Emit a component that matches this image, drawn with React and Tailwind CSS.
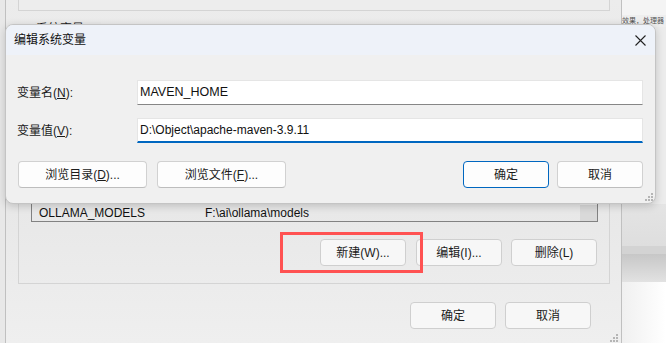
import React from 'react';

const font = { fontFamily: '"Liberation Sans", "Noto Sans CJK SC", sans-serif' };

function Grip({ className }) {
  return (
    <svg width="8" height="8" viewBox="0 0 8 8" className={className}>
      <rect x="6" y="0" width="2" height="2" fill="#b5b5b5" />
      <rect x="3" y="3" width="2" height="2" fill="#b5b5b5" />
      <rect x="6" y="3" width="2" height="2" fill="#b5b5b5" />
      <rect x="0" y="6" width="2" height="2" fill="#b5b5b5" />
      <rect x="3" y="6" width="2" height="2" fill="#b5b5b5" />
      <rect x="6" y="6" width="2" height="2" fill="#b5b5b5" />
    </svg>
  );
}

function Btn({ children, primary, dim, className = '' }) {
  const tone = primary
    ? 'border-[#0067c0] bg-[#fdfdfd]'
    : dim
    ? 'border-[#cfcfcf] bg-[#f7f7f7]'
    : 'border-[#d1d1d1] border-b-[#bdbdbd] bg-[#fdfdfd]';
  return (
    <div className={`h-[27px] rounded-[4px] border flex items-center justify-center text-[12px] text-[#1b1b1b] ${tone} ${className}`}>
      {children}
    </div>
  );
}

function EditDialog() {
  return (
    <div className="absolute left-[5px] top-[24px] w-[651px] h-[180px] rounded-[8px] border border-[#c4c4c4] bg-[#f0f0f0] shadow-[0_2px_8px_rgba(0,0,0,0.18)] overflow-hidden flex flex-col">
      <div className="h-[30px] bg-[#eef2f9] flex items-center justify-between pl-[8px] pr-[9px]">
        <span className="text-[12px] text-[#111]">编辑系统变量</span>
        <svg width="11" height="11" viewBox="0 0 11 11">
          <path d="M0.5 0.5 L10.5 10.5 M10.5 0.5 L0.5 10.5" stroke="#222" strokeWidth="1.1" />
        </svg>
      </div>
      <div className="relative flex-1 flex flex-col pl-[11px] pr-[12px] pt-[25px]">
        <div className="flex items-center h-[25px]">
          <span className="w-[120px] text-[12px] text-[#1b1b1b]">
            变量名(<u>N</u>):
          </span>
          <div className="flex-1 h-[25px] bg-white border border-[#e5e5e5] border-b-[#868686] flex items-center pl-[2px] text-[12.5px] text-[#111]">
            MAVEN_HOME
          </div>
        </div>
        <div className="flex items-center h-[25px] mt-[13px]">
          <span className="w-[120px] text-[12px] text-[#1b1b1b]">
            变量值(<u>V</u>):
          </span>
          <div className="flex-1 h-[25px] bg-white border border-[#e5e5e5] border-b-2 border-b-[#0067c0] flex items-center pl-[2px] text-[12px] text-[#111]">
            {'D:\\Object\\apache-maven-3.9.11'}
          </div>
        </div>
        <div className="flex items-center mt-[18px]">
          <Btn className="w-[129px] ml-[1px]">
            浏览目录(<u>D</u>)...
          </Btn>
          <Btn className="w-[129px] ml-[10px]">
            浏览文件(<u>F</u>)...
          </Btn>
          <div className="flex-1" />
          <Btn primary className="w-[86px]">确定</Btn>
          <Btn className="w-[86px] ml-[8px]">取消</Btn>
        </div>
        <Grip className="absolute right-[2px] bottom-[2px]" />
      </div>
    </div>
  );
}

export default function App() {
  return (
    <div style={font} className="relative w-[666px] h-[343px] overflow-hidden flex bg-[#ececec]">
      <div className="w-[5px] bg-[#e8e8e8]" />
      <div className="relative w-[617px] border-l border-r border-[#c0c0c0] bg-gradient-to-b from-[#ececec] via-[#e6e6e6] to-[#efefef] flex flex-col">
        <div className="ml-[12px] w-[592px] h-[11px] border-x border-b border-[#d4d4d4] bg-[#ededed]" />
        <div className="relative ml-[12px] mt-[16px] w-[592px] h-[257px] border border-[#d4d4d4] flex flex-col pl-[12px] pr-[12px]">
          <span className="absolute left-[16px] -top-[6px] px-[1px] text-[12px] leading-[14px] text-[#1b1b1b] bg-[#e9e9e9]">
            系统变量(<u>S</u>)
          </span>
          <div className="mt-[16px] h-[178px] w-[567px] border border-[#828282] flex">
            <div className="flex-1 flex flex-col justify-end">
              <div className="h-[17px] flex items-center text-[12px] text-[#111] pl-[7px]">
                <span className="w-[166px]">OLLAMA_MODELS</span>
                <span>{'F:\\ai\\ollama\\models'}</span>
              </div>
            </div>
            <div className="w-[17px] flex flex-col justify-end bg-[#ebebeb]">
              <div className="h-[16px] bg-[#d9d9d9]" />
            </div>
          </div>
          <div className="flex justify-end mt-[17px]">
            <div className="relative">
              <Btn dim className="w-[86px]">新建(W)...</Btn>
              <div className="absolute -left-[40px] -right-[17px] -top-[7px] -bottom-[7px] border-[3px] border-[#ff5252]" />
            </div>
            <Btn dim className="w-[86px] ml-[10px]">编辑(I)...</Btn>
            <Btn dim className="w-[86px] ml-[9px]">删除(L)</Btn>
          </div>
        </div>
        <div className="flex justify-end pr-[30px] mt-[18px]">
          <Btn dim className="w-[86px]">确定</Btn>
          <Btn dim className="w-[86px] ml-[9px]">取消</Btn>
        </div>
        <Grip className="absolute right-[3px] bottom-[1px]" />
      </div>
      <div className="flex-1 flex flex-col text-[9px] text-[#555] whitespace-nowrap overflow-hidden">
        <div className="h-[15px] bg-[#f4f4f4]" />
        <div className="h-[12px] bg-[#eeeeee] leading-[12px] text-[7px] overflow-hidden">效果，处理器</div>
        <div className="h-[177px] bg-[#ececec] flex flex-col">
          <span className="mt-[55px] leading-[12px]">的</span>
          <span className="mt-[57px] leading-[12px]">数</span>
        </div>
        <div className="h-[42px] bg-gradient-to-b from-[#e4e4e4] to-[#dedede]" />
        <div className="h-[8px] bg-[#d3d3d3]" />
        <div className="h-[28px] bg-gradient-to-b from-[#c7c7c7] to-[#e2e2e2]" />
        <div className="flex-1 bg-gradient-to-r from-[#f0f0f0] to-white" />
      </div>
      <EditDialog />
    </div>
  );
}
